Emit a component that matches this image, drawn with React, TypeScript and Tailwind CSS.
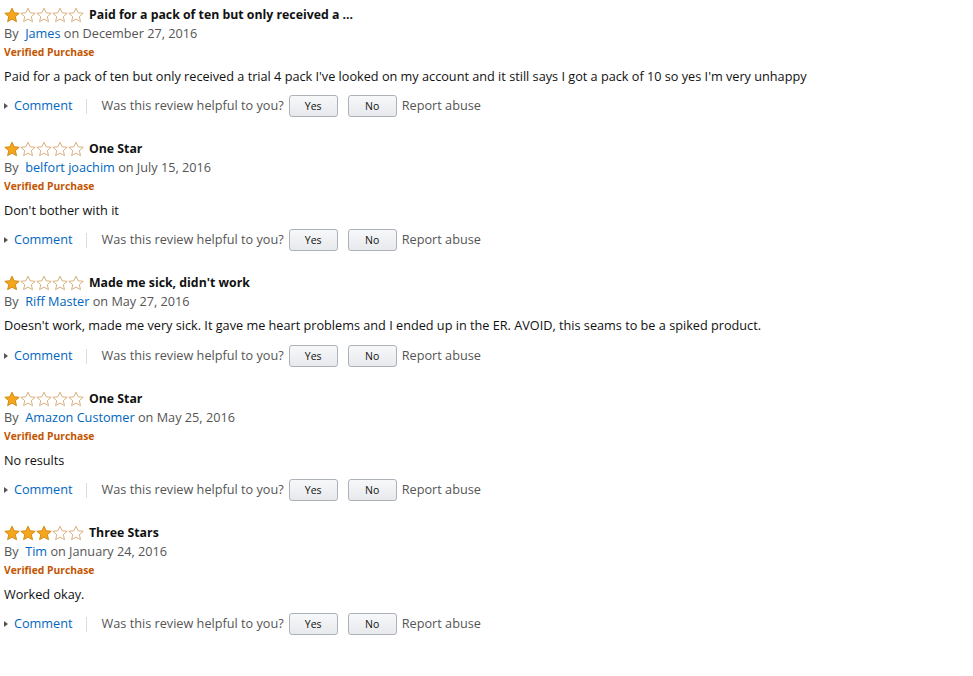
import React from "react";

type Review = {
  stars: number;
  title: string;
  author: string;
  date: string;
  verified: boolean;
  body: string;
};

const reviews: Review[] = [
  {
    stars: 1,
    title: "Paid for a pack of ten but only received a ...",
    author: "James",
    date: "December 27, 2016",
    verified: true,
    body: "Paid for a pack of ten but only received a trial 4 pack I've looked on my account and it still says I got a pack of 10 so yes I'm very unhappy",
  },
  {
    stars: 1,
    title: "One Star",
    author: "belfort joachim",
    date: "July 15, 2016",
    verified: true,
    body: "Don't bother with it",
  },
  {
    stars: 1,
    title: "Made me sick, didn't work",
    author: "Riff Master",
    date: "May 27, 2016",
    verified: false,
    body: "Doesn't work, made me very sick. It gave me heart problems and I ended up in the ER. AVOID, this seams to be a spiked product.",
  },
  {
    stars: 1,
    title: "One Star",
    author: "Amazon Customer",
    date: "May 25, 2016",
    verified: true,
    body: "No results",
  },
  {
    stars: 3,
    title: "Three Stars",
    author: "Tim",
    date: "January 24, 2016",
    verified: true,
    body: "Worked okay.",
  },
];

function Star({ filled }: { filled: boolean }) {
  return (
    <svg width="16" height="16" viewBox="0 0 24 23" className="block">
      <path
        d="M12 1.2l3.2 7 7.6.7-5.8 5.1 1.8 7.5L12 17.6l-6.6 3.9 1.8-7.5L1.2 8.9l7.6-.7z"
        fill={filled ? "#f4a71d" : "#ffffff"}
        stroke={filled ? "#d28b10" : "#d9b080"}
        strokeWidth="1.5"
        strokeLinejoin="round"
      />
    </svg>
  );
}

function VoteButton({ label }: { label: string }) {
  return (
    <button className="h-[22px] w-[49px] rounded-[3px] border border-[#adb1b8] bg-gradient-to-b from-[#f7f8fa] to-[#e7e9ec] text-[10.5px] leading-none text-[#111]">
      {label}
    </button>
  );
}

function ReviewItem({ r }: { r: Review }) {
  return (
    <div className="pb-[18px]">
      <div className="flex h-[19px] items-center pt-px">
        <div className="flex pl-[4px]">
          {[0, 1, 2, 3, 4].map((i) => (
            <Star key={i} filled={i < r.stars} />
          ))}
        </div>
        <span className="ml-[5px] text-[12.3px] font-bold text-[#111]">{r.title}</span>
      </div>
      <div className="flex h-[19px] items-center pl-[4px] text-[12.7px] text-[#555]">
        By&nbsp;&nbsp;<span className="text-[#0066c0]">{r.author}</span>&nbsp;on {r.date}
      </div>
      {r.verified && (
        <div className="flex h-[20px] items-center pl-[4px] text-[10.3px] font-bold text-[#c45500]">
          Verified Purchase
        </div>
      )}
      <div
        className={`flex items-center pl-[4px] text-[12.7px] text-[#111] ${
          r.verified ? "h-[28px]" : "h-[30px]"
        }`}
      >
        {r.body}
      </div>
      <div className="flex h-[30px] items-center text-[12.7px]">
        <span className="ml-[4px] mr-[6px] inline-block h-0 w-0 border-y-[3.5px] border-l-[4px] border-y-transparent border-l-[#555]" />
        <span className="text-[#0066c0]">Comment</span>
        <span className="ml-[13px] mr-[15px] h-[15px] w-px bg-[#ddd]" />
        <span className="mr-[5px] text-[#555]">Was this review helpful to you?</span>
        <VoteButton label="Yes" />
        <span className="w-[10px]" />
        <VoteButton label="No" />
        <span className="ml-[5px] text-[#555]">Report abuse</span>
      </div>
    </div>
  );
}

export default function App() {
  return (
    <div
      className="h-[676px] w-[973px] bg-white pt-[5px]"
      style={{ fontFamily: '"Open Sans", Arial, sans-serif' }}
    >
      {reviews.map((r, i) => (
        <ReviewItem key={i} r={r} />
      ))}
    </div>
  );
}
